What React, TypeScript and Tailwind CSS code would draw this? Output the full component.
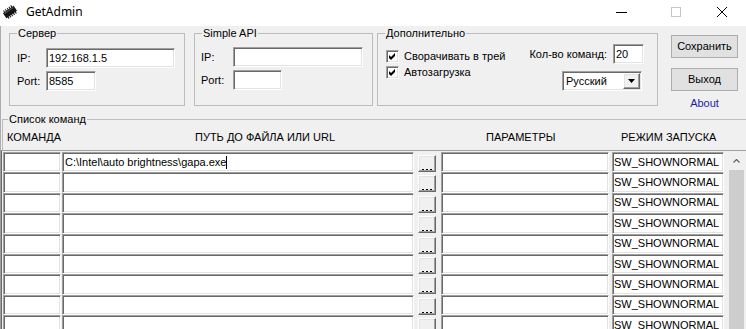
import React from "react";

const sunken =
  "bg-white border border-t-[#a0a0a0] border-l-[#a0a0a0] border-b-white border-r-white shadow-[inset_1px_1px_0_#696969,inset_-1px_-1px_0_#e3e3e3]";
const raised =
  "bg-[#f0f0f0] border border-t-white border-l-white border-b-[#696969] border-r-[#696969] shadow-[inset_-1px_-1px_0_#a0a0a0,inset_1px_1px_0_#e3e3e3]";

function Chip() {
  const pins = [0, 1, 2, 3, 4];
  return (
    <svg width="16" height="16" viewBox="0 0 16 16">
      <g transform="rotate(-35 8 8)">
        {pins.map((i) => (
          <line key={i} x1={3.5 + i * 2.2} y1="3" x2={3.5 + i * 2.2} y2="13" stroke="#2a2a2a" strokeWidth="1.1" />
        ))}
        <rect x="1.5" y="5" width="13" height="6" fill="#141414" />
        <rect x="2.5" y="5.6" width="11" height="1" fill="#5a5a5a" />
      </g>
    </svg>
  );
}

function CheckBox() {
  return (
    <div className={`w-[13px] h-[13px] flex items-center justify-center ${sunken}`}>
      <svg width="7" height="7" viewBox="0 0 7 7">
        <polygon points="0,2 2,4 6,0 6,3 2,7 0,5" fill="#000" />
      </svg>
    </div>
  );
}

function Row({ path }: { path?: string }) {
  return (
    <div className="flex h-[20.4px] shrink-0">
      <div className={`w-[58px] h-full mr-[1px] ${sunken}`} />
      <div className={`w-[352px] h-full flex items-center pl-[2px] ${sunken}`}>
        {path && (
          <>
            <span className="leading-[13px] whitespace-pre">{path}</span>
            <span className="w-[1px] h-[13px] bg-black" />
          </>
        )}
      </div>
      <div className={`ml-[4px] mt-[3px] w-[18px] h-[17px] flex items-end justify-center gap-[2px] pb-[1px] ${raised}`}>
        <span className="w-[2px] h-[1px] bg-black" />
        <span className="w-[2px] h-[1px] bg-black" />
        <span className="w-[2px] h-[1px] bg-black" />
      </div>
      <div className={`ml-[5px] w-[168px] h-full ${sunken}`} />
      <div className={`ml-[3px] w-[112px] h-full flex items-center pl-[1px] ${sunken}`}>
        <span className="leading-[13px]">SW_SHOWNORMAL</span>
      </div>
    </div>
  );
}

export default function App() {
  const rows = [0, 1, 2, 3, 4, 5, 6, 7, 8];
  return (
    <div className="w-[746px] h-[329px] overflow-hidden flex flex-col bg-[#f0f0f0] text-black text-[11px] font-['Liberation_Sans',Arial,sans-serif]">
      {/* Title bar */}
      <div className="h-[26px] shrink-0 bg-white flex items-center pb-[2px]">
        <div className="ml-[2px] flex">
          <Chip />
        </div>
        <span className="ml-[8px] text-[12px] font-['Noto_Sans',sans-serif]">GetAdmin</span>
        <div className="ml-auto flex items-center pr-[19px]">
          <svg width="11" height="10" viewBox="0 0 11 10" className="mr-[44px]">
            <line x1="0" y1="5.5" x2="11" y2="5.5" stroke="#000" strokeWidth="1" />
          </svg>
          <svg width="10" height="10" viewBox="0 0 10 10" className="mr-[36px]">
            <rect x="0.5" y="0.5" width="9" height="9" fill="none" stroke="#c6c6c6" strokeWidth="1" />
          </svg>
          <svg width="10" height="10" viewBox="0 0 10 10">
            <path d="M0 0 L10 10 M10 0 L0 10" stroke="#000" strokeWidth="1" />
          </svg>
        </div>
      </div>

      <div className="border-l border-l-[#acacac] shrink-0">
        {/* Top section */}
        <div className="h-[87px] flex items-start pl-[8px] pt-[1px]">
          <fieldset className="w-[176px] h-[79px] border border-[#bcbcbc]">
            <legend className="ml-[7px] px-[1px] leading-[12px]">Сервер</legend>
            <div className="pl-[7px] pt-[9px] flex flex-col gap-[3px]">
              <div className="flex items-center">
                <span className="w-[29px]">IP:</span>
                <div className={`w-[129px] h-[20px] flex items-center pl-[2px] ${sunken}`}>192.168.1.5</div>
              </div>
              <div className="flex items-center">
                <span className="w-[29px]">Port:</span>
                <div className={`w-[50px] h-[20px] flex items-center pl-[2px] ${sunken}`}>8585</div>
              </div>
            </div>
          </fieldset>

          <fieldset className="ml-[9px] w-[179px] h-[79px] border border-[#bcbcbc]">
            <legend className="ml-[7px] px-[1px] leading-[12px]">Simple API</legend>
            <div className="pl-[6px] pt-[8px] flex flex-col gap-[3px]">
              <div className="flex items-center">
                <span className="w-[32px]">IP:</span>
                <div className={`w-[130px] h-[20px] ${sunken}`} />
              </div>
              <div className="flex items-center">
                <span className="w-[32px]">Port:</span>
                <div className={`w-[49px] h-[20px] ${sunken}`} />
              </div>
            </div>
          </fieldset>

          <fieldset className="ml-[4px] w-[281px] h-[79px] border border-[#bcbcbc]">
            <legend className="ml-[7px] px-[1px] leading-[12px]">Дополнительно</legend>
            <div className="flex">
              <div className="pl-[8px] pt-[11px] flex flex-col gap-[3px]">
                <div className="flex items-center h-[13px]">
                  <CheckBox />
                  <span className="ml-[5px]">Сворачивать в трей</span>
                </div>
                <div className="flex items-center h-[13px]">
                  <CheckBox />
                  <span className="ml-[5px]">Автозагрузка</span>
                </div>
              </div>
              <div className="ml-auto pr-[13px] pt-[5px] flex flex-col items-end">
                <div className="flex items-center">
                  <span>Кол-во команд:</span>
                  <div className={`ml-[6px] w-[31px] h-[20px] flex items-center pl-[2px] ${sunken}`}>20</div>
                </div>
                <div className={`mt-[7px] mr-[2px] w-[80px] h-[20px] p-[1px] flex items-center ${sunken}`}>
                  <span className="flex-1 pl-[2px]">Русский</span>
                  <div className={`w-[17px] h-[16px] flex items-center justify-center ${raised}`}>
                    <svg width="7" height="4" viewBox="0 0 7 4">
                      <polygon points="0,0 7,0 3.5,4" fill="#000" />
                    </svg>
                  </div>
                </div>
              </div>
            </div>
          </fieldset>

          <div className="ml-[13px] w-[67px] pt-[8px] flex flex-col">
            <button className="h-[23px] w-full bg-[#e1e1e1] border border-[#adadad] flex items-center justify-center">
              Сохранить
            </button>
            <button className="mt-[10px] h-[23px] w-full bg-[#e1e1e1] border border-[#adadad] flex items-center justify-center">
              Выход
            </button>
            <div className="mt-[6px] leading-[13px] text-center text-[#1d1da0]">About</div>
          </div>
        </div>

        {/* Список команд */}
        <fieldset className="ml-[1px] h-[37px] border-t border-l border-[#bcbcbc]">
          <legend className="ml-[5px] px-[1px] leading-[12px]">Список команд</legend>
          <div className="h-[25px] flex items-center pl-[4px] whitespace-nowrap">
            <span className="w-[188px]">КОМАНДА</span>
            <span className="w-[291px]">ПУТЬ ДО ФАЙЛА ИЛИ URL</span>
            <span className="w-[135px]">ПАРАМЕТРЫ</span>
            <span>РЕЖИМ ЗАПУСКА</span>
          </div>
        </fieldset>
      </div>

      {/* Scroll box */}
      <div className="flex-1 min-h-0 flex border-t border-l border-t-[#a0a0a0] border-l-[#a0a0a0] shadow-[inset_1px_0_0_#696969]">
        <div className="flex-1 min-w-0 pl-[2px] pt-[1px] flex flex-col overflow-hidden">
          {rows.map((i) => (
            <Row key={i} path={i === 0 ? "C:\\Intel\\auto brightness\\gapa.exe" : undefined} />
          ))}
        </div>
        <div className="w-[19px] bg-[#f0f0f0] flex flex-col">
          <div className="h-[19px] flex items-center justify-center">
            <svg width="7" height="4" viewBox="0 0 7 4">
              <path d="M0.5 3.5 L3.5 0.5 L6.5 3.5" fill="none" stroke="#606060" strokeWidth="1.2" />
            </svg>
          </div>
          <div className="ml-[2px] w-[15px] flex-1 bg-[#cdcdcd]" />
        </div>
      </div>
    </div>
  );
}
